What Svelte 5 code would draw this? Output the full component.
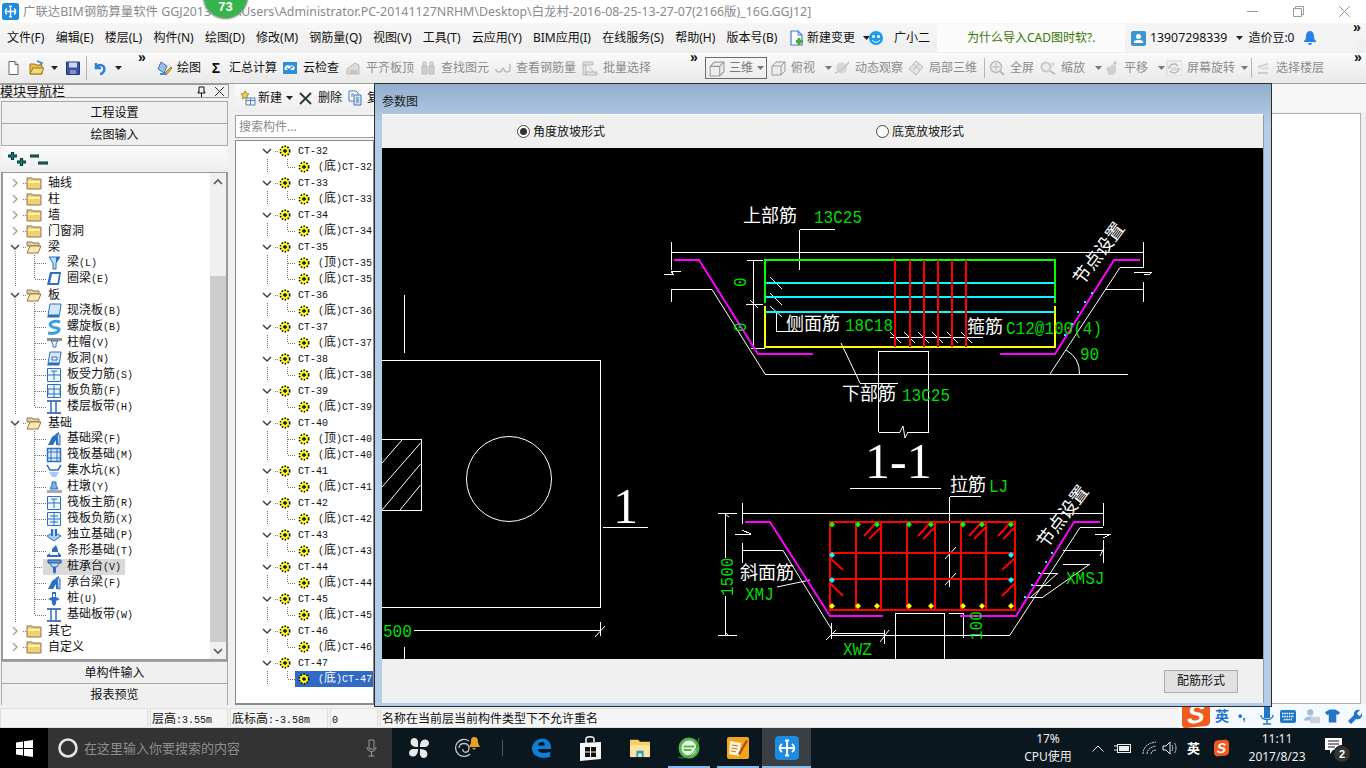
<script>
    const B = '#2a6fc4', L = '#bcdcf6', G = '#b9b9b9', W = '#fff', D = '#1c4f96';

    // every icon is a list of [path, fill, stroke, strokeWidth]
    const icons = {
        beam: [['M3 2h11l-4 6v6H7V8z', L, B], ['M10 2l4 0-4 6z', B]],
        ring: [['M4 1h11l-2 13H1z', B], ['M6 3h7l-1.500 9H4z', W]],
        slab: [['M4 1h11l-1.500 11H2z', '#d4e8fa', B], ['M2 12h11.500v2.500H1z', B]],
        spiral: [['M14 3C8 1 2 4 5 7s9 1 8 4-6 4-11 3', 'none', '#3d9ee6', 3]],
        cap: [['M1 3h15v3H1z', '#8f8f8f'], ['M5 6h7l-2 3v3H7V9z', W, B]],
        hole: [['M4 1h11l-1.500 11H2z', '#d4e8fa', B], ['M2 12h11.500v2.500H1z', B], ['M6 6h5v3H6z', W, B]],
        force: [['M1.500 1.500h13v13h-13z', '#eef6fd', B], ['M2 8h12M8 4v9M5 4h6', 'none', B]],
        neg: [['M1.500 1.500h13v13h-13z', '#eef6fd', B], ['M2 6h12v5H2zM8 2v12', 'none', B]],
        strip: [['M1 2h14M1 14h14', 'none', D, 1.500], ['M5 3v10M10 3v10', 'none', B, 1.500]],
        fbeam: [['M2 14l4-8 7-5v13h-3V9L7 14z', B], ['M11 2l3 2v10h-2z', L, B]],
        raft: [['M1.500 1.500h13v13h-13z', '#dcecfa', B, 1.500], ['M5 2v12M11 2v12M2 5h12M2 11h12', 'none', B]],
        pit: [['M1 2l3 5h8l3-5', 'none', B, 1.500], ['M3 9h10l-3 5H6z', '#a6cdee']],
        pier: [['M1 11h15v3H1z', '#a9a9a9'], ['M6 3h4v3l2 4H4l2-4z', '#7fb2e4', B]],
        rneg: [['M1.500 1.500h13v13h-13z', '#eef6fd', B], ['M8 2v12M2 8h12M4 5h8M4 11h8', 'none', B]],
        iso: [['M1 9l7-4 7 4-7 5z', '#a9cdef', B], ['M5 2h6v7H5z', B], ['M7 2h2v7H7z', L]],
        stripf: [['M1 14h14v-2l-3-3V7l-2-5-4 4v3L1 12z', B], ['M4 12h8V9H4z', W]],
        pilecap: [['M2 1h13v3H2z', '#6d9bd4', D], ['M4 4h9l-2 4H6z', L, B], ['M7 8h3v5l-1.500 2L7 13z', B]],
        pile: [['M6 1h4v5l4 2-4 2v3l-2 2-2-2v-3L2 8l4-2z', B], ['M7 3h2v3H7z', W]],
        doc: [['M4 1.500h6l3 3v10H4z', W, '#666'], ['M10 1.500v3h3', '#ddd', '#666']],
        open: [['M2 4h5l1 1h6v9H2z', '#e9b949', '#9b7a22'], ['M5 8h11l-3 6H2z', '#f7d978', '#9b7a22'], ['M9 1l5 2-2 2', 'none', '#4b7db8', 1.500]],
        save: [['M1.500 2h13v12.500h-13z', '#3754a5', '#27396f'], ['M4 2.500h8v5H4z', '#cfd8ee'], ['M5 10h6v4H5z', '#7f93c9']],
        undo: [['M4 3v5h5', 'none', '#2f7fd6', 2.500], ['M4 8c3-5 10-3 8 3-1 2-3 3-4 3', 'none', '#2f7fd6', 2.500]],
        draw: [['M5 2l6 4-3 7-6-4z', '#9bc1ea', '#3f6fa8'], ['M9 13l6-6 1 1-6 7z', '#f0c04a', '#947018'], ['M4 13h6v2H4z', '#3d8ed8']],
        cloud: [['M1 2h14v12H1z', '#2c8fd8'], ['M3 10c-2-4 3-6 5-4 3-2 6 1 4 4z', W], ['M5 8l2 2 4-4', 'none', '#2c8fd8', 1.500]],
        flat: [['M2 9l8-6 4 2v9H2z', '#dcdcdc', G], ['M5 10h7v4H5z', '#c4c4c4']],
        find: [['M2 6h5v8H2zM9 6h5v8H9z', '#cfcfcf', G], ['M3 2h3v4H3zM10 2h3v4h-3z', '#dedede', G]],
        glass: [['M1 9a3 3 0 1 0 6 0M9 9a3 3 0 1 0 6 0M7 9c1-1 1-1 2 0', 'none', '#bdbdbd', 1.500], ['M15 9V4', 'none', '#bdbdbd', 1.500]],
        batch: [['M1 2h10v3H1zM1 5h3v10H1zM4 12h11v3H4z', '#e1e1e1', G], ['M7 7l7 7', 'none', G]],
        cube: [['M2 6l4-4h9v9l-4 4H2z', '#ededed', '#9a9a9a'], ['M2 6h9v9M11 6l4-4', 'none', '#9a9a9a']],
        orbit: [['M3 11a5 5 0 1 0 9-6 5 5 0 1 0-9 6', '#d6d6d6'], ['M1 13C5 12 12 7 15 2', 'none', '#c5c5c5', 1.500]],
        local: [['M8 1l7 6-7 8-7-6z', '#e4e4e4', G], ['M5 4l7 6M11 4l-6 6', 'none', G]],
        full: [['M7 7m-5.500 0a5.500 5.500 0 1 0 11 0a5.500 5.500 0 1 0-11 0', '#efefef', G, 1.500], ['M11 11l4 4', 'none', G, 2], ['M7 3v8M3 7h8', 'none', G]],
        zoom: [['M6 7m-4.500 0a4.500 4.500 0 1 0 9 0a4.500 4.500 0 1 0-9 0', '#ececec', '#c9c9c9', 2], ['M10 11l5 3', 'none', G, 2], ['M13 2v5M11 4h4', 'none', '#d0d0d0']],
        pan: [['M3 9l3-3 1 2 2-4 4 3v5l-3 3H6z', '#cfcfcf'], ['M12 1v5M10 3h4', 'none', G]],
        spin: [['M1 1h15v15H1z', '#f2f2f2', '#d4d4d4'], ['M3 9a5 5 0 0 1 9-3M13 8a5 5 0 0 1-9 3', 'none', G, 1.500], ['M5 7h7v4H5z', '#dcdcdc']],
        layer: [['M3 6l10-3v2L3 8zM3 9l10-2v2H3zM3 12h10v2H3z', '#cdcdcd']],
        newc: [['M5 1l1.500 2.500L9 4 7 6l.5 3L5 7.500 2.500 9 3 6 1 4l2.500-.5z', '#f1cf4b', '#a8891c'], ['M6 8h9v7H6z', '#eef4fb', '#5a83b8'], ['M6 10.500h9M10.500 8v7', 'none', '#5a83b8']],
        copy: [['M2 1h7l2 2v8H2z', W, '#4a78b0'], ['M7 5h7v10H7z', '#cfe2f6', '#4a78b0'], ['M4 4h3M4 6h2M9 8h3M9 10h3M9 12h3', 'none', '#4a78b0']],
        change: [['M3 1h7l4 4v10H3z', W, '#3c82d8', 1.200], ['M10 1v4h4', 'none', '#3c82d8'], ['M11 8v7M8 11.500h7', 'none', '#4aa83a', 3]]
    };

    const menus = ['文件(F)', '编辑(E)', '楼层(L)', '构件(N)', '绘图(D)', '修改(M)', '钢筋量(Q)', '视图(V)', '工具(T)', '云应用(Y)', 'BIM应用(I)', '在线服务(S)', '帮助(H)', '版本号(B)'];

    const toolsA = [
        { ic: 'draw', t: '绘图', ml: 3, on: true },
        { sigma: true, t: '汇总计算', ml: 7, on: true },
        { ic: 'cloud', t: '云检查', ml: 5, on: true },
        { ic: 'flat', t: '平齐板顶', ml: 6 },
        { ic: 'find', t: '查找图元', ml: 6 },
        { ic: 'glass', t: '查看钢筋量', ml: 6 },
        { ic: 'batch', t: '批量选择', ml: 6 }
    ];
    const toolsB = [
        { ic: 'cube', t: '俯视', ml: 3, arrow: true },
        { ic: 'orbit', t: '动态观察', ml: 2 },
        { ic: 'local', t: '局部三维', ml: 5 }
    ];
    const toolsC = [
        { ic: 'full', t: '全屏', ml: 4 },
        { ic: 'zoom', t: '缩放', ml: 6, arrow: true },
        { ic: 'pan', t: '平移', ml: 1, arrow: true },
        { ic: 'spin', t: '屏幕旋转', ml: 1, arrow: true, tight: true }
    ];

    const navTree = [
        { t: '轴线', k: 'closed' }, { t: '柱', k: 'closed' }, { t: '墙', k: 'closed' }, { t: '门窗洞', k: 'closed' },
        { t: '梁', k: 'open' },
        { t: '梁(L)', ic: 'beam' }, { t: '圈梁(E)', ic: 'ring', last: true },
        { t: '板', k: 'open' },
        { t: '现浇板(B)', ic: 'slab' }, { t: '螺旋板(B)', ic: 'spiral' }, { t: '柱帽(V)', ic: 'cap' }, { t: '板洞(N)', ic: 'hole' },
        { t: '板受力筋(S)', ic: 'force' }, { t: '板负筋(F)', ic: 'neg' }, { t: '楼层板带(H)', ic: 'strip', last: true },
        { t: '基础', k: 'open' },
        { t: '基础梁(F)', ic: 'fbeam' }, { t: '筏板基础(M)', ic: 'raft' }, { t: '集水坑(K)', ic: 'pit' }, { t: '柱墩(Y)', ic: 'pier' },
        { t: '筏板主筋(R)', ic: 'force' }, { t: '筏板负筋(X)', ic: 'rneg' }, { t: '独立基础(P)', ic: 'iso' }, { t: '条形基础(T)', ic: 'stripf' },
        { t: '桩承台(V)', ic: 'pilecap', hot: true }, { t: '承台梁(F)', ic: 'fbeam' }, { t: '桩(U)', ic: 'pile' }, { t: '基础板带(W)', ic: 'strip', last: true },
        { t: '其它', k: 'closed' }, { t: '自定义', k: 'closed' }
    ];

    // CT numbers that also have a 顶 child
    const withTop = [35, 40];
    const comps = [];
    for (let n = 32; n <= 47; n++) {
        comps.push({ t: 'CT-' + n, parent: true });
        if (withTop.includes(n)) comps.push({ t: '(顶)CT-' + n + '-', top: true });
        comps.push({ t: '(底)CT-' + n + '-', last: true, sel: n === 47 });
    }

    const parts = (s) => s.match(/[\x00-\x7f]+|[^\x00-\x7f]+/g);

    // drawing data, in page coordinates
    const topReds = [895, 910, 924, 938, 952, 966];
    const botVerts = [856, 881, 907, 935, 961, 986];
    const botDots = [832, 858, 877, 909, 931, 963, 982, 1011];
    const hooks = [864, 918, 969, 998];
    const seams = [890, 904, 918, 932, 947, 961];

    // green labels: the CAD font is tall and narrow, 9.6px per character
    const greens = [
        { t: '13C25', x: 814, y: 223 },
        { t: '18C18', x: 845, y: 331 },
        { t: 'C12@100(4)', x: 1006, y: 334 },
        { t: '90', x: 1080, y: 360 },
        { t: '13C25', x: 902, y: 401 },
        { t: 'LJ', x: 989, y: 492 },
        { t: 'XMJ', x: 745, y: 600 },
        { t: 'XMSJ', x: 1066, y: 584 },
        { t: 'XWZ', x: 843, y: 655 },
        { t: '500', x: 383, y: 637 },
        { t: '1500', x: 733, y: 596, rot: true },
        { t: '100', x: 982, y: 640, rot: true },
        { t: '0', x: 746, y: 287, rot: true },
        { t: '0', x: 746, y: 332, rot: true }
    ];
</script>

{#snippet icon(name, size = 16)}
    <svg class="ico" width={size} height={size} viewBox="0 0 16 16">
        {#each icons[name] as [d, fill, stroke, sw]}
            <path {d} {fill} stroke={stroke || 'none'} stroke-width={sw || 1} />
        {/each}
    </svg>
{/snippet}

{#snippet mono(text)}
    {#each parts(text) as p}
        {#if p.charCodeAt(0) < 128}<span class="lat">{p}</span>{:else}{p}{/if}
    {/each}
{/snippet}

{#snippet caret()}
    <svg class="caret" width="7" height="4" viewBox="0 0 7 4"><path d="M0 0h7L3.500 4z" fill="#222" /></svg>
{/snippet}

{#snippet more()}
    <span class="more">»</span>
{/snippet}

{#snippet tool(it)}
    <div class="tool" class:on={it.on} style:margin-left="{it.ml}px">
        {#if it.sigma}<span class="sigma">Σ</span>{:else}{@render icon(it.ic)}{/if}
        <span>{it.t}</span>
        {#if it.arrow}<svg class="caret" class:tight={it.tight} width="7" height="4" viewBox="0 0 7 4"><path d="M0 0h7L3.500 4z" fill="#777" /></svg>{/if}
    </div>
{/snippet}

{#snippet folder(open)}
    <svg class="ico" width="16" height="14" viewBox="0 0 16 14">
        {#if open}
            <path d="M1 2h5l1 1h6v3H1z" fill="#e5cf9b" stroke="#8c7a53" />
            <path d="M4 6h11l-3 7H1z" fill="#fde9ad" stroke="#8c7a53" />
        {:else}
            <path d="M1 2h5l1 1h8v10H1z" fill="#f5cf6a" stroke="#8c7a53" />
            <path d="M2 5h12v2H2z" fill="#fdf0c4" />
        {/if}
    </svg>
{/snippet}

{#snippet gear()}
    <svg class="ico" width="12" height="12" viewBox="0 0 12 12">
        <circle cx="6" cy="6" r="4.700" fill="#ff0" stroke="#000" stroke-width="1.600" stroke-dasharray="1.500 1.500" />
        <path d="M6 4v4M4 6h4" stroke="#000" stroke-width="1.300" />
    </svg>
{/snippet}

{#snippet appMark(size)}
    <svg class="ico" width={size} height={size} viewBox="0 0 24 24">
        <rect width="24" height="24" rx="4" fill="#1c8be0" />
        <path d="M12 4v16M5 12h14M10 4.500h4M10 19.500h4" stroke="#fff" stroke-width="2" fill="none" />
        <path d="M7 8c-3 2-3 6 0 8M17 8c3 2 3 6 0 8" stroke="#fff" stroke-width="2" fill="none" />
    </svg>
{/snippet}

<div class="app">
    <header class="titlebar">
        {@render appMark(17)}
        <span class="title-text">广联达BIM钢筋算量软件 GGJ2013 - [C:\Users\Administrator.PC-20141127NRHM\Desktop\白龙村-2016-08-25-13-27-07(2166版)_16G.GGJ12]</span>
        <div class="win-btns">
            <svg width="11" height="11" viewBox="0 0 11 11"><path d="M0 5.500h11" stroke="#999" /></svg>
            <svg width="11" height="11" viewBox="0 0 11 11"><path d="M.5 2.500h8v8h-8zM2.500 2.500v-2h8v8h-2" stroke="#999" fill="none" /></svg>
            <svg width="11" height="11" viewBox="0 0 11 11"><path d="M0 0l11 11M11 0L0 11" stroke="#999" /></svg>
        </div>
    </header>

    <nav class="menubar">
        <div class="menu-items">
            {#each menus as m}<span>{m}</span>{/each}
        </div>
        <div class="menu-change">{@render icon('change')}<span>新建变更</span>{@render caret()}</div>
        <div class="menu-bot">
            <svg width="16" height="16" viewBox="0 0 16 16"><circle cx="8" cy="8" r="7" fill="#1b9be8" /><circle cx="5.500" cy="6.500" r="1.500" fill="#fff" /><circle cx="10.500" cy="6.500" r="1.500" fill="#fff" /><path d="M4 10c2 3 6 3 8 0" stroke="#fff" fill="none" /></svg>
            <span>广小二</span>
        </div>
        <div class="menu-tip">为什么导入CAD图时软?.</div>
        <div class="menu-user">
            <svg width="15" height="15" viewBox="0 0 15 15"><rect width="15" height="15" rx="2" fill="#3f93cf" /><circle cx="7.500" cy="5.500" r="2.500" fill="#fff" /><path d="M3 12h9v-2l-3-1H6l-3 1z" fill="#fff" /></svg>
            <span class="phone">13907298339</span>{@render caret()}
            <span class="beans">造价豆:0</span>
            <svg width="14" height="16" viewBox="0 0 14 16"><path d="M7 1c-3 0-4 3-4 6 0 2-1 3-2 4v1h12v-1c-1-1-2-2-2-4 0-3-1-6-4-6zM5 13a2 2 0 0 0 4 0z" fill="#2380e8" /></svg>
        </div>
        {@render more()}
    </nav>

    <div class="toolbar">
        <div class="tg tg-file">
            <span class="file-doc">{@render icon('doc')}</span>
            <span class="file-open">{@render icon('open')}{@render caret()}</span>
            <span class="file-save">{@render icon('save')}</span>
            <i class="sep"></i>
            <span class="file-undo">{@render icon('undo')}{@render caret()}</span>
            {@render more()}
        </div>
        <div class="tg tg-main">
            {#each toolsA as it}{@render tool(it)}{/each}
            {@render more()}
        </div>
        <div class="tg tg-view">
            <div class="dd">{@render icon('cube', 17)}<span>三维</span><svg class="caret" width="7" height="4" viewBox="0 0 7 4"><path d="M0 0h7L3.500 4z" fill="#777" /></svg></div>
            {#each toolsB as it}{@render tool(it)}{/each}
            <i class="sep sep-a"></i>
            {#each toolsC as it}{@render tool(it)}{/each}
            <i class="sep sep-b"></i>
            {@render tool({ ic: 'layer', t: '选择楼层', ml: 0 })}
            {@render more()}
        </div>
    </div>

    <main class="work">
        <aside class="nav">
            <div class="nav-head">
                <span>模块导航栏</span>
                <span class="nav-pin">
                    <svg width="9" height="11" viewBox="0 0 9 11"><path d="M2 1h5v5h1v1H1V6h1zM4.500 7v4" stroke="#111" fill="none" /></svg>
                    <svg width="9" height="9" viewBox="0 0 9 9"><path d="M0 0l9 9M9 0L0 9" stroke="#333" /></svg>
                </span>
            </div>
            <button class="nav-btn">工程设置</button>
            <button class="nav-btn">绘图输入</button>
            <div class="expand-bar">
                <svg width="44" height="18" viewBox="0 0 44 18">
                    <path d="M2 5h9M6.500 1v8M11 11h9M15.500 7v8M24 5h9M32 12h10" stroke="#04302c" stroke-width="3.200" fill="none" />
                    <path d="M2.500 5h8M6.500 1.500v7M11.500 11h8M15.500 7.500v7M24.500 5h8M32.500 12h9" stroke="#0d8a7c" stroke-width="1.200" fill="none" />
                </svg>
            </div>
            <div class="nav-tree">
                <div class="nav-rows">
                    {#each navTree as row}
                        <div class="row">
                            {#if row.k}
                                <svg class="guide" width="23" height="16" viewBox="3 0 23 16">
                                    {#if row.k === 'open'}
                                        <path d="M11 6l4 4 4-4" fill="none" stroke="#444" stroke-width="1.500" />
                                        <path d="M15 12v4" stroke="#777" stroke-dasharray="1 1" />
                                    {:else}
                                        <path d="M13 4l4 4-4 4" fill="none" stroke="#a6a6a6" stroke-width="1.500" />
                                    {/if}
                                    <path d="M23 8.500h3" stroke="#777" stroke-dasharray="1 1" />
                                </svg>
                                {@render folder(row.k === 'open')}
                                <span class="nav-label">{row.t}</span>
                            {:else}
                                <svg class="guide" width="43" height="16" viewBox="3 0 43 16">
                                    <path d="M15.500 0v16" stroke="#777" stroke-dasharray="1 1" />
                                    <path d="M34.500 0v{row.last ? 8 : 16}M35 8.500h11" stroke="#777" stroke-dasharray="1 1" fill="none" />
                                </svg>
                                <span class="nav-child" class:hot={row.hot}>
                                    {@render icon(row.ic)}
                                    <span class="child-label">{@render mono(row.t)}</span>
                                </span>
                            {/if}
                        </div>
                    {/each}
                </div>
                <div class="scroll">
                    <svg width="16" height="17" viewBox="0 0 16 17"><path d="M4 11l4-4 4 4" fill="none" stroke="#555" stroke-width="1.600" /></svg>
                    <div class="scroll-track"><div class="scroll-thumb"></div></div>
                    <svg width="16" height="17" viewBox="0 0 16 17"><path d="M4 7l4 4 4-4" fill="none" stroke="#555" stroke-width="1.600" /></svg>
                </div>
            </div>
            <button class="nav-btn">单构件输入</button>
            <button class="nav-btn">报表预览</button>
        </aside>

        <section class="comps">
            <div class="comp-tools">
                {@render icon('newc')}
                <span class="ct-new">新建</span>{@render caret()}
                <svg class="ct-x" width="13" height="13" viewBox="0 0 13 13"><path d="M1 1l11 11M12 1L1 12" stroke="#333" stroke-width="1.800" /></svg>
                <span>删除</span>
                <span class="ct-copy">{@render icon('copy')}</span>
                <span>复制</span>
            </div>
            <div class="search">搜索构件...</div>
            <div class="comp-tree">
                {#each comps as c}
                    <div class="crow">
                        {#if c.parent}
                            <svg class="guide" width="43" height="16" viewBox="236 0 43 16">
                                <path d="M263 6l4 4 4-4" fill="none" stroke="#444" stroke-width="1.500" />
                                <path d="M275 8.500h4" stroke="#777" stroke-dasharray="1 1" />
                            </svg>
                            {@render gear()}
                            <span class="ct-name">{@render mono(c.t)}</span>
                        {:else}
                            <svg class="guide" width="59" height="16" viewBox="236 0 59 16">
                                <path d="M267.500 0v{c.last ? 14 : 16}" stroke="#777" stroke-dasharray="1 1" />
                                <path d="M287.500 0v{c.last ? 8 : 16}M288 8.500h7" stroke="#777" stroke-dasharray="1 1" fill="none" />
                            </svg>
                            <span class="ct-child" class:sel={c.sel}>
                                {@render gear()}
                                <span class="ct-sub">{@render mono(c.t)}</span>
                            </span>
                        {/if}
                    </div>
                {/each}
            </div>
        </section>

        <section class="view">
            <div class="view-head"></div>
            <div class="view-body"></div>
        </section>
    </main>

    <footer class="status">
        <div class="cell c1"></div>
        <div class="cell c2">{@render mono('层高:3.55m')}</div>
        <div class="cell c3">{@render mono('底标高:-3.58m')}</div>
        <div class="cell c4">{@render mono('0')}</div>
        <div class="cell c5">名称在当前层当前构件类型下不允许重名</div>
    </footer>

    <div class="taskbar">
        <div class="start">
            <svg width="17" height="17" viewBox="0 0 17 17"><path d="M0 2.500L7 1.500v6.500H0zM8 1.300L17 0v8H8zM0 9h7v6.500L0 14.500zM8 9h9v8l-9-1.300z" fill="#fff" /></svg>
        </div>
        <div class="cortana">
            <svg width="22" height="22" viewBox="0 0 22 22"><circle cx="11" cy="11" r="8.500" fill="none" stroke="#e4e4e4" stroke-width="2.600" /></svg>
            <span class="cortana-text">在这里输入你要搜索的内容</span>
            <svg width="11" height="18" viewBox="0 0 11 18"><path d="M3 1h5v9H3zM1 8c0 6 9 6 9 0M5.500 13v4M2.500 17h6" stroke="#9b9b9b" fill="none" /></svg>
        </div>
        <div class="apps">
            <span class="app-slot">
                <svg width="22" height="24" viewBox="0 0 24 24"><path d="M11 11C5 11 2 8 3 4s7-4 8 1zM13 11c0-6 3-9 7-8s4 7-1 8zM13 13c6 0 9 3 8 7s-7 4-8-1zM11 13c0 6-3 9-7 8s-4-7 1-8z" fill="#e8e8e8" /></svg>
            </span>
            <span class="app-slot">
                <svg width="28" height="24" viewBox="0 0 28 24"><path d="M16 18a8.500 8.500 0 1 1-1-13M5 12c0-6 10-6 10 0s-7 5-6 1" fill="none" stroke="#c9c9c9" stroke-width="1.300" /><path d="M20 1c-3 0-3 3-3 6l-2 4h11l-2-4c0-3 0-6-4-6zM18 12h4l-2 2z" fill="#e9a21f" /></svg>
            </span>
            <i class="app-div"></i>
            <span class="app-slot">
                <svg width="21" height="22" viewBox="0 0 24 24"><path d="M1 12C2 5 8 1 13 1c7 0 10 5 10 12H8c0 5 8 6 14 3v6c-8 3-21 1-21-10zm7-3h8c0-5-7-5-8 0z" fill="#0f7fd6" /></svg>
            </span>
            <span class="app-slot">
                <svg width="21" height="25" viewBox="0 0 21 25"><path d="M0 7l21-1v17l-21 2z" fill="#f6f6f6" /><path d="M6 7V3c0-3 8-3 8 0v3" fill="none" stroke="#f6f6f6" stroke-width="1.500" /><path d="M5 11h5v4.500H5zM11 11h5v4.500h-5zM5 16.500h5V21H5zM11 16.500h5V21h-5z" fill="#111" /></svg>
            </span>
            <span class="app-slot">
                <svg width="22" height="20" viewBox="0 0 24 22"><path d="M1 2h9l2 2h11v17H1z" fill="#f4cf67" /><path d="M1 8h22v13H1z" fill="#fbe59d" /><path d="M8 21v-7h8v7h-2v-4h-4v4z" fill="#2a9ad6" /></svg>
            </span>
            <span class="app-slot running">
                <svg width="24" height="24" viewBox="0 0 24 24"><circle cx="12" cy="12" r="10.500" fill="#54b948" /><circle cx="12" cy="12" r="7.500" fill="#ecf7e6" /><path d="M6.500 10.500h11M6.500 14h8" fill="none" stroke="#54b948" stroke-width="2" /><path d="M1 21C8 24 20 20 22 2" fill="none" stroke="#2f8f34" /></svg>
            </span>
            <span class="app-slot running">
                <svg width="24" height="24" viewBox="0 0 24 24"><rect x="1" y="1" width="22" height="22" rx="2" fill="#f3a61c" /><path d="M4 5l11 2-2 13-10-2z" fill="#fdf3dc" /><path d="M6 9l6 1M5.500 12l6 1M5 15l5 .8" stroke="#b8742a" /><path d="M12 18l8-14 2 1-8 14z" fill="#b5461a" /></svg>
            </span>
            <span class="app-slot active">
                {@render appMark(24)}
            </span>
        </div>
        <div class="tray">
            <div class="cpu">17%<br />CPU使用</div>
            <svg class="t-up" width="12" height="7" viewBox="0 0 12 7"><path d="M.5 6.500L6 1l5.500 5.500" fill="none" stroke="#eee" /></svg>
            <svg class="t-bat" width="18" height="11" viewBox="0 0 18 11"><path d="M0 3h3M0 7h3" stroke="#eee" /><rect x="3.500" y="1.500" width="13" height="8" fill="none" stroke="#eee" /><rect x="5" y="3" width="10" height="5" fill="#eee" /></svg>
            <svg class="t-wifi" width="16" height="14" viewBox="0 0 16 14"><path d="M1 13C1 6 6 2 14 1M5 13c0-4 3-7 9-8M9 13c0-2 2-4 5-4" fill="none" stroke="#ccc" stroke-dasharray="2 .6" /></svg>
            <svg class="t-vol" width="16" height="14" viewBox="0 0 16 14"><path d="M1 5h3l4-4v12L4 9H1z" fill="none" stroke="#eee" /><path d="M10 4c1 2 1 4 0 6M12.500 2c2 3 2 7 0 10" fill="none" stroke="#bbb" /></svg>
            <span class="t-lang">英</span>
            <span class="sogou small">S</span>
            <div class="clock">11:11<br />2017/8/23</div>
            <span class="notify">
                <svg width="17" height="16" viewBox="0 0 17 16"><path d="M0 0h17v12H8l-3 4v-4H0z" fill="#fff" /><path d="M3 3h11M3 6h11M3 9h7" stroke="#111" /></svg>
                <b>2</b>
            </span>
        </div>
    </div>

    <div class="badge"><span>73</span></div>

    <div class="ime">
        <span class="sogou">S</span>
        <span class="ime-en">英</span>
        <span class="ime-dot">•,</span>
        <svg class="im-mic" width="14" height="18" viewBox="0 0 14 18"><path d="M4 0h6v11H4z" fill="#2176c7" /><path d="M1 8c0 6 12 6 12 0M7 13v3M3 17h8" stroke="#2176c7" stroke-width="1.500" fill="none" /></svg>
        <svg class="im-kb" width="16" height="13" viewBox="0 0 16 13"><rect width="16" height="13" rx="2" fill="#2176c7" /><path d="M2 3.500h12M2 6.500h12M4 9.500h8" stroke="#fff" stroke-width="1.300" stroke-dasharray="1.500 .8" /></svg>
        <svg class="im-av" width="16" height="16" viewBox="0 0 18 16"><circle cx="7" cy="4" r="3.500" fill="#a8bdd2" /><path d="M0 13c0-6 14-6 14 0z" fill="#a8bdd2" /><rect x="7" y="9" width="11" height="7" fill="#c6d3df" /></svg>
        <svg class="im-sh" width="15" height="14" viewBox="0 0 16 14"><path d="M5 0h6l5 3-2 3-2-1v9H4V5L2 6 0 3z" fill="#2176c7" /></svg>
        <svg class="im-wr" width="15" height="15" viewBox="0 0 15 15"><path d="M1 12l6-6c-1-3 2-6 6-5l-3 3 1 2 2 1 2-3c1 4-2 7-6 6l-5 5z" fill="#2176c7" /></svg>
    </div>

    <div class="dialog">
        <div class="dlg-title">参数图</div>
        <div class="dlg-body">
            <div class="dlg-radios">
                <label class="radio"><i class="dot on"></i>角度放坡形式</label>
                <label class="radio"><i class="dot"></i>底宽放坡形式</label>
            </div>
            <svg class="cad" viewBox="382 148 881 511" width="881" height="511">
                <rect x="382" y="148" width="881" height="511" fill="#000" />
                <g fill="none" stroke="#fff" shape-rendering="crispEdges">
                    <!-- plan view -->
                    <path d="M382 360.500H600.500V607.500H382" />
                    <path d="M404.500 295V353M404.500 647V659" />
                    <path d="M382 439.500H421.500V510.500H382" />
                    <path d="M603 527.500H648M414 630.500H600.500M600.500 622V636" />
                    <!-- top section frame -->
                    <path d="M671.500 242V270M671.500 289V302M664 274H673L671 271H681" />
                    <path d="M671.500 252.500H1143M671.500 289.500H712M765 374.500H1128" />
                    <path d="M1143.500 242V268M1143.500 282V302M1105 289.500H1143M1120 267.500H1143M1134 272H1152L1150 274H1144" />
                    <path d="M799.500 229.500H835M799.500 229.500V270M776.500 313V331.500H800M747 260.500H763M746 304.500H763M751 348.500H765M753.500 260V347" />
                    <path d="M860 383.500H898M890 337.500H983M878.500 432V351.500H928.500V432M878.500 432.500H900M908 432.500H928.500" />
                    <!-- bottom section frame -->
                    <path d="M850 488.500H941M949.500 496.500H981M949.500 496.500V587" />
                    <path d="M742.500 503V524M742.500 543V563M735 534H751L742 530M742.500 513.500H1103M742.500 550.500H783" />
                    <path d="M1103.500 503V526M1103.500 540V563M1063 550.500H1103M1080 527.500H1103M1095 534H1111L1103 538" />
                    <path d="M832 635.500H1010M725.500 513V558M725.500 596V635M718 513.500H737M718 635.500H737" />
                    <path d="M831.500 623V639M884.500 630V644M832 633.500H884M949 613.500H963M963.500 613V638M958 635.500H963" />
                    <path d="M895.500 659V613.500H944.500V659" />
                    <path d="M1063 564.500H1090M1038 573.500H1058M1031 585.500H1051M1025 597.500H1043" />
                </g>
                <g fill="none" stroke="#fff">
                    <circle cx="509" cy="479" r="42.500" />
                    <path d="M382 463L402 440M382 487L420.500 443M382 510L420.500 464M400 510L420.500 485M595 637L605 626" />
                    <path d="M712 289.500L765 374M1120 267.500L1050 374M1066 350Q1080 358 1079.500 374" />
                    <path d="M770 277L782 289M770 293L782 305M770 306L782 317M750 300L758 308" />
                    <path d="M841 343L860 383" />
                    {#each seams as s}<path d="M{s} 332L{s + 11} 343" />{/each}
                    <path d="M900 432L903 426L905 438L908 432M783 550.500L832 630M1010 635L1080 527.500" />
                    <path d="M777 587L810 580M1090 564L1043 597M1058 573L1031 597" />
                    <path d="M945 559L956 547M945 585L956 573M826 640L836 630M880 642L889 630M1100 556L1104 548M725 514L729 517M725 632L729 636" />
                </g>
                <g fill="none" stroke="#f0f" stroke-width="2">
                    <path d="M674 260H699L758 354H813" />
                    <path d="M1000 354H1055L1114 260H1140" />
                    <path d="M745 522H770L830 616H883" />
                    <path d="M960 616H1016L1074 522H1100" />
                </g>
                <g fill="none" stroke-width="2" shape-rendering="crispEdges">
                    <path d="M765 303V260H1055V303" stroke="#0f0" />
                    <path d="M765 306V347H1055V306" stroke="#ff0" />
                    <path d="M765 283H1055M765 297H1055M765 312H1055" stroke="#0ff" />
                    {#each topReds as x}<path d="M{x} 260V347" stroke="#f00" />{/each}
                    <path d="M830 522H1015V610H830zM830 553H1015M830 579H1015" stroke="#f00" />
                    {#each botVerts as x}<path d="M{x} 522V610" stroke="#f00" />{/each}
                </g>
                <g fill="none" stroke="#f00" stroke-width="2">
                    {#each hooks as x}
                        <path d="M{x} 536L{x + 12} 523M{x + 5} 539L{x + 17} 527" />
                    {/each}
                    <path d="M830 558L843 570M830 583L843 596M1015 558L1002 570M1015 583L1002 596" />
                </g>
                <g>
                    {#each botDots as x}
                        <path d="M{x - 3} 524.500L{x} 521.500L{x + 3} 524.500L{x} 527.500z" fill="#0f0" />
                        <path d="M{x - 3} 606L{x} 603L{x + 3} 606L{x} 609z" fill="#ff0" />
                    {/each}
                    <path d="M829 555L832 552L835 555L832 558zM1008 555L1011 552L1014 555L1011 558zM829 580L832 577L835 580L832 583zM1008 580L1011 577L1014 580L1011 583z" fill="#0ff" />
                    <path d="M1064 334h2v2h-2zM1071 323h2v2h-2zM1077 311h2v2h-2zM1084 301h2v2h-2zM1091 292h2v2h-2zM1024 596h2v2h-2zM1031 584h2v2h-2zM1038 572h2v2h-2zM1045 561h2v2h-2zM1051 552h2v2h-2z" fill="#0ff" />
                </g>

                <g class="wt">
                    <text x="743" y="222">上部筋</text>
                    <text x="786" y="330">侧面筋</text>
                    <text x="967" y="333">箍筋</text>
                    <text x="842" y="400">下部筋</text>
                    <text x="950" y="491">拉筋</text>
                    <text x="740" y="579">斜面筋</text>
                    <text transform="translate(1082 286) rotate(-53)">节点设置</text>
                    <text transform="translate(1046 549) rotate(-53)">节点设置</text>
                </g>
                <g class="gn">
                    {#each greens as g}
                        <text
                            transform="translate({g.x} {g.y}){g.rot ? ' rotate(-90)' : ''}"
                            textLength={g.t.length * 9.6}
                            lengthAdjust="spacingAndGlyphs">{g.t}</text>
                    {/each}
                </g>
                <g class="big">
                    <text x="865" y="478">1-1</text>
                    <text x="613" y="523">1</text>
                </g>
            </svg>
            <div class="dlg-foot"><button class="dlg-btn">配筋形式</button></div>
        </div>
    </div>
</div>

<style>
    :global(body) {
        margin: 0;
        background: #f0f0f0;
    }

    .app {
        position: relative;
        width: 1366px;
        height: 768px;
        overflow: hidden;
        display: flex;
        flex-direction: column;
        background: #f0f0f0;
        font: 12px/16px "Noto Sans", "Noto Sans CJK SC", sans-serif;
        color: #111;
    }

    .ico, .guide, .caret {
        flex: none;
        display: block;
    }

    .lat {
        font-family: "Liberation Mono", monospace;
        font-size: 10px;
    }

    /* title bar */
    .titlebar {
        height: 23px;
        flex: none;
        display: flex;
        align-items: center;
        padding-left: 2px;
        background: #fff;
    }

    .title-text {
        margin-left: 4px;
        font-size: 12.4px;
        color: #8a8a8a;
        white-space: nowrap;
    }

    .win-btns {
        margin-left: auto;
        display: flex;
        gap: 35px;
        padding-right: 16px;
    }

    /* menu bar */
    .menubar {
        position: relative;
        height: 30px;
        flex: none;
        display: flex;
        align-items: center;
        background: linear-gradient(#f6f6f6, #eeeeee);
    }

    .menu-items {
        display: flex;
        gap: 11.2px;
        padding-left: 7px;
        width: 781px;
        box-sizing: border-box;
        white-space: nowrap;
    }

    .menu-change, .menu-bot, .menu-user {
        display: flex;
        align-items: center;
    }

    .menu-change {
        width: 87px;
        gap: 3px;
        padding-left: 7px;
        box-sizing: border-box;
        white-space: nowrap;
    }

    .menu-change .caret {
        margin-left: 5px;
    }

    .menu-bot {
        width: 69px;
        gap: 10px;
    }

    .menu-tip {
        width: 158px;
        height: 28px;
        padding-left: 30px;
        line-height: 28px;
        color: #3a7600;
        background: #fbfbfb;
        border-radius: 3px 3px 0 0;
    }

    .menu-user {
        margin-left: 2px;
        padding-left: 4px;
        width: 225px;
        height: 28px;
        gap: 4px;
        background: #f3f3f3;
    }

    .phone {
        font-size: 12.3px;
        margin-right: 5px;
    }

    .beans {
        margin-left: 1px;
        margin-right: 5px;
    }

    .more {
        position: absolute;
        left: 1353px;
        top: -3px;
        font: bold 14px/14px "Liberation Sans", sans-serif;
    }

    /* main toolbar */
    .toolbar {
        height: 31px;
        flex: none;
        display: flex;
        align-items: center;
        gap: 3px;
        border-bottom: 1px solid #a0a0a0;
        box-sizing: border-box;
        background: linear-gradient(#fafafa, #e9e9e9);
    }

    .tg {
        position: relative;
        display: flex;
        align-items: center;
        height: 30px;
    }

    .tg-file {
        width: 150px;
    }

    .tg-file .more {
        left: 138px;
    }

    .file-doc {
        margin-left: 5px;
    }

    .file-open, .file-undo {
        display: flex;
        align-items: center;
        gap: 7px;
    }

    .file-open {
        margin-left: 7px;
    }

    .file-save {
        margin-left: 7px;
    }

    .file-undo {
        margin-left: 5px;
    }

    .sep {
        width: 1px;
        height: 24px;
        margin-left: 5px;
        background: #b5b5b5;
    }

    .tg-main {
        width: 549px;
    }

    .tg-main .more {
        left: 537px;
    }

    .tg-view {
        flex: 1;
    }

    .tg-view .more {
        left: 649px;
    }

    .tool {
        display: flex;
        align-items: center;
        gap: 5px;
        color: #8c8c8c;
        white-space: nowrap;
    }

    .tool.on {
        color: #111;
    }

    .tool .caret {
        margin-left: 5px;
    }

    .tool .caret.tight {
        margin-left: 1px;
    }

    .sigma {
        width: 16px;
        text-align: center;
        font: bold 14px/16px "Liberation Sans", sans-serif;
        color: #111;
    }

    .dd {
        display: flex;
        align-items: center;
        gap: 4px;
        width: 62px;
        height: 22px;
        padding-left: 2px;
        box-sizing: border-box;
        border: 1px solid #6b6b6b;
        color: #777;
    }

    .sep-a {
        height: 20px;
        margin-left: 7px;
    }

    .sep-b {
        height: 20px;
        margin-left: 3px;
        margin-right: 3px;
    }

    /* work area */
    .work {
        flex: 1;
        min-height: 0;
        display: flex;
    }

    .nav {
        width: 229px;
        flex: none;
        display: flex;
        flex-direction: column;
        padding-bottom: 3px;
        box-sizing: border-box;
    }

    .nav-head {
        height: 12px;
        margin-bottom: 3px;
        border: 1px solid #9a9a9a;
        border-left: none;
        display: flex;
        justify-content: space-between;
        align-items: center;
        font-size: 13px;
    }

    .nav-pin {
        display: flex;
        align-items: center;
        gap: 9px;
        padding-right: 4px;
    }

    .nav-btn {
        height: 22px;
        flex: none;
        padding: 0;
        margin: 0 1px 0 1px;
        font: inherit;
        color: #111;
        background: #f0f0f0;
        border: 1px solid #a8a8a8;
        border-width: 1px 1px 0 1px;
        line-height: 20px;
    }

    .expand-bar {
        height: 27px;
        flex: none;
        margin: 0 1px;
        padding: 5px 0 0 5px;
        box-sizing: border-box;
        border-top: 1px solid #a8a8a8;
        background: linear-gradient(#fafafa, #eeeeee);
    }

    .nav-tree {
        flex: 1;
        min-height: 0;
        margin: 0 1px;
        display: flex;
        background: #fff;
        border: 1px solid #9a9a9a;
        border-width: 1px 2px 2px 2px;
    }

    .nav-rows {
        flex: 1;
        padding-top: 2px;
    }

    .row, .crow {
        display: flex;
        align-items: center;
        height: 16px;
        white-space: nowrap;
    }

    .nav-label {
        margin-left: 6px;
        font-size: 12px;
    }

    .nav-child {
        display: flex;
        align-items: center;
        height: 16px;
        padding-right: 4px;
    }

    .nav-child.hot {
        margin-left: -3px;
        padding-left: 3px;
        background: #d9d9d9;
    }

    .child-label {
        margin-left: 5px;
    }

    .scroll {
        width: 16px;
        flex: none;
        display: flex;
        flex-direction: column;
        background: #f0f0f0;
    }

    .scroll-track {
        flex: 1;
        padding-top: 86px;
    }

    .scroll-thumb {
        height: 100%;
        background: #cdcdcd;
    }

    /* component list */
    .comps {
        width: 140px;
        margin-left: 6px;
        flex: none;
        display: flex;
        flex-direction: column;
        padding-bottom: 3px;
        box-sizing: border-box;
    }

    .comp-tools {
        height: 28px;
        flex: none;
        display: flex;
        align-items: center;
        gap: 4px;
        padding-left: 5px;
        white-space: nowrap;
        overflow: hidden;
        background: linear-gradient(#fafafa, #eeeeee);
    }

    .comp-tools span {
        flex: none;
    }

    .ct-new {
        margin-left: -2px;
    }

    .ct-x {
        flex: none;
        margin-left: 2px;
        margin-right: 2px;
    }

    .ct-copy {
        margin-left: 1px;
    }

    .search {
        height: 23px;
        margin-top: 3px;
        padding-left: 3px;
        line-height: 21px;
        box-sizing: border-box;
        background: #fff;
        border: 1px solid #a0a0a0;
        color: #8a8a8a;
        white-space: nowrap;
        overflow: hidden;
    }

    .comp-tree {
        flex: 1;
        min-height: 0;
        margin-top: 2px;
        padding-top: 2px;
        overflow: hidden;
        background: #fff;
        border: 1px solid #8c8c8c;
        border-width: 1px 2px 2px 1px;
    }

    .ct-name {
        margin-left: 7px;
    }

    .ct-child {
        display: flex;
        align-items: center;
        flex: 1;
        height: 16px;
        padding-left: 3px;
    }

    .ct-child.sel {
        background: #316ac5;
        color: #fff;
    }

    .ct-sub {
        margin-left: 8px;
    }

    .view {
        flex: 1;
        display: flex;
        flex-direction: column;
    }

    .view-head {
        height: 28px;
        background: #f7f7f7;
    }

    .view-body {
        flex: 1;
        margin: 1px 5px 4px 0;
        background: #fff;
        border: 1px solid #b0b0b0;
    }

    /* status bar */
    .status {
        height: 20px;
        flex: none;
        display: flex;
        gap: 2px;
        background: #f0f0f0;
    }

    .cell {
        border: 1px solid #e0e0e0;
        background: #f5f5f5;
        line-height: 19px;
        padding-left: 1px;
        box-sizing: border-box;
        white-space: nowrap;
    }

    .c1 {
        width: 148px;
    }

    .c2 {
        width: 78px;
    }

    .c3 {
        width: 98px;
    }

    .c4 {
        width: 48px;
    }

    .c5 {
        flex: 1;
    }

    /* taskbar */
    .taskbar {
        height: 40px;
        flex: none;
        display: flex;
        align-items: center;
        background: #0a171e;
        color: #eee;
    }

    .start {
        width: 48px;
        height: 40px;
        flex: none;
        display: flex;
        align-items: center;
        justify-content: center;
        background: #000;
    }

    .cortana {
        width: 344px;
        height: 40px;
        flex: none;
        display: flex;
        align-items: center;
        padding: 0 15px 0 9px;
        box-sizing: border-box;
        background: #333;
    }

    .cortana-text {
        flex: 1;
        margin-left: 5px;
        font-size: 13px;
        color: #8d8d8d;
    }

    .apps {
        display: flex;
        align-items: center;
        flex: none;
        width: 423px;
        height: 40px;
    }

    .app-slot {
        width: 49px;
        height: 40px;
        flex: none;
        display: flex;
        align-items: center;
        justify-content: center;
    }

    .app-slot:first-child {
        margin-left: 2px;
    }

    .app-div {
        width: 1px;
        height: 16px;
        flex: none;
        margin: 0 14px 0 10px;
        background: #4a5a62;
    }

    .running {
        background: linear-gradient(#82bdee, #82bdee) center bottom / 42px 2px no-repeat;
    }

    .active {
        background: #393f43;
        box-shadow: inset 0 -2px 0 #82bdee;
    }

    .tray {
        flex: 1;
        min-width: 0;
        position: relative;
        display: flex;
        align-items: center;
        height: 40px;
    }

    .tray > * {
        flex: none;
    }

    .cpu, .clock {
        text-align: center;
        line-height: 18px;
        font-size: 12px;
    }

    .cpu {
        width: 60px;
        margin-left: 203px;
    }

    .t-up {
        margin-left: 14px;
    }

    .t-bat {
        margin-left: 10px;
    }

    .t-wifi {
        margin-left: 10px;
    }

    .t-vol {
        margin-left: 4px;
    }

    .t-lang {
        margin-left: 9px;
        font-size: 13px;
        font-weight: 700;
        color: #fff;
    }

    .sogou {
        width: 28px;
        height: 26px;
        flex: none;
        display: flex;
        align-items: center;
        justify-content: center;
        background: #f05a1c;
        border-radius: 4px;
        transform: skewY(-6deg);
        font: italic bold 26px/26px "Liberation Sans", sans-serif;
        color: #fff;
    }

    .sogou.small {
        width: 15px;
        height: 16px;
        margin-left: 14px;
        font-size: 14px;
        line-height: 16px;
    }

    .clock {
        width: 64px;
        margin-left: 16px;
    }

    .notify {
        position: relative;
        margin-left: 16px;
    }

    .notify b {
        position: absolute;
        left: 8px;
        top: 7px;
        width: 16px;
        height: 16px;
        border-radius: 50%;
        background: #333;
        border: 1px solid #111;
        text-align: center;
        font: bold 11px/16px "Liberation Sans", sans-serif;
        color: #fff;
    }

    /* overlays */
    .badge {
        position: absolute;
        left: 203px;
        top: -26px;
        width: 45px;
        height: 45px;
        border-radius: 50%;
        background: #35b44c;
        border: 1px solid #9aa39c;
        box-shadow: 0 0 2px #777;
        box-sizing: border-box;
        text-align: center;
    }

    .badge span {
        position: absolute;
        left: 0;
        right: 0;
        top: 25px;
        color: #fff;
        font: bold 13px/14px "Liberation Sans", sans-serif;
    }

    .ime {
        position: absolute;
        left: 1178px;
        top: 704px;
        width: 188px;
        height: 24px;
        padding-left: 4px;
        box-sizing: border-box;
        display: flex;
        align-items: center;
        background: #f3f9ff;
    }

    .ime .sogou {
        margin-top: -5px;
    }

    .ime-en {
        margin-left: 5px;
        font-size: 14px;
        font-weight: 700;
        color: #2176c7;
    }

    .ime-dot {
        width: 10px;
        margin-left: 9px;
        font: bold 12px/12px "Liberation Sans", sans-serif;
        color: #2176c7;
    }

    .im-mic {
        margin-left: 12px;
    }

    .im-kb {
        margin-left: 6px;
    }

    .im-av {
        margin-left: 8px;
    }

    .im-sh {
        margin-left: 5px;
    }

    .im-wr {
        margin-left: 7px;
    }

    .dialog {
        position: absolute;
        left: 374px;
        top: 83px;
        width: 898px;
        height: 624px;
        box-sizing: border-box;
        border: 1px solid #2d2d2d;
        padding: 0 7px 3px;
        display: flex;
        flex-direction: column;
        background: linear-gradient(#92aecd, #b4cde6 40px);
    }

    .dlg-title {
        height: 30px;
        flex: none;
        line-height: 36px;
        font-size: 12px;
        color: #1a1a1a;
    }

    .dlg-body {
        flex: 1;
        display: flex;
        flex-direction: column;
        background: #f0f0f0;
        border-top: 1px solid #fff;
        border-right: 1px solid #9a9a9a;
    }

    .dlg-radios {
        height: 33px;
        flex: none;
        display: flex;
        align-items: center;
        padding-left: 135px;
    }

    .radio {
        width: 359px;
        display: flex;
        align-items: center;
        gap: 3px;
    }

    .dot {
        width: 13px;
        height: 13px;
        border: 1px solid #444;
        border-radius: 50%;
        box-sizing: border-box;
        background: #fff;
        display: flex;
        align-items: center;
        justify-content: center;
    }

    .dot.on::after {
        content: "";
        width: 7px;
        height: 7px;
        border-radius: 50%;
        background: #333;
    }

    .cad {
        display: block;
        flex: none;
    }

    .cad text {
        stroke: none;
    }

    .wt text {
        fill: #fff;
        font: 18px "Noto Sans CJK SC", sans-serif;
    }

    .gn text {
        fill: #0d0;
        font: 19px "Liberation Mono", monospace;
    }

    .big text {
        fill: #fff;
        font: 50px "Liberation Serif", serif;
    }

    .dlg-foot {
        flex: 1;
        display: flex;
        justify-content: flex-end;
        align-items: center;
        padding-right: 25px;
    }

    .dlg-btn {
        width: 74px;
        height: 23px;
        padding: 0;
        font: inherit;
        color: #111;
        background: #e1e1e1;
        border: 1px solid #adadad;
    }
</style>
